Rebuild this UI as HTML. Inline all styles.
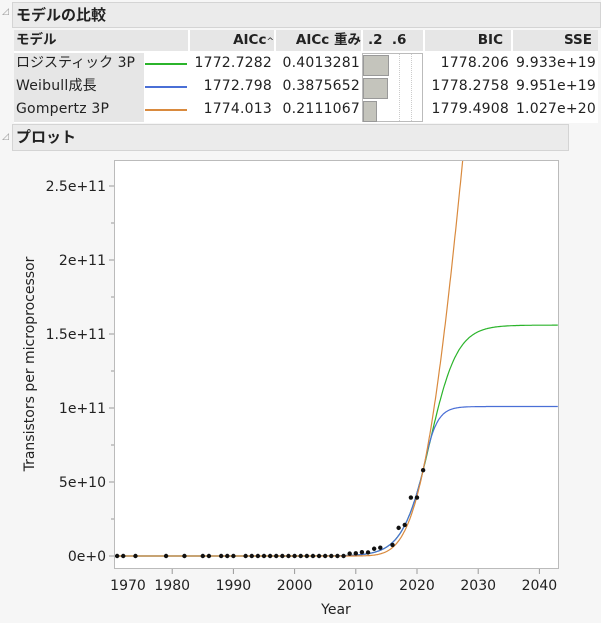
<!DOCTYPE html>
<html><head><meta charset="utf-8"><style>
body{margin:0;width:601px;height:623px;background:#f6f6f6;font-family:"DejaVu Sans","Noto Sans CJK JP",sans-serif;position:relative;overflow:hidden;color:#222}
.abs{position:absolute}
.bar{background:#ebebeb;border:1px solid #d4d4d4;font-weight:bold;font-size:15px;line-height:25px;padding-left:3px;box-sizing:border-box}
.tri{font-size:9px;color:#999}
.c{position:absolute;font-size:14px;line-height:22px;white-space:nowrap;letter-spacing:0.2px}
.h{font-weight:bold;background:#e6e6e6;top:30px;height:21px;line-height:21px;font-size:13.5px;letter-spacing:0}
</style></head><body>
<div class="abs tri" style="left:2px;top:7px">◿</div>
<div class="abs bar" style="left:12px;top:2px;width:589px;height:26px">モデルの比較</div>
<div class="abs" style="left:14px;top:30px;width:584px;height:93px;background:#fff"></div>
<div class="c h" style="left:14px;width:130px;padding-left:2px">モデル</div>
<div class="c h" style="left:146px;width:42px"></div>
<div class="c h" style="left:190px;width:84px;text-align:right">AICc<span style="font-size:9px;font-weight:normal">^</span></div>
<div class="c h" style="left:276px;width:85px;text-align:right">AICc 重み</div>
<div class="c h" style="left:363px;width:60px;padding-left:5px;box-sizing:border-box">.2&nbsp; .6</div>
<div class="c h" style="left:425px;width:86px;text-align:right;padding-right:8px;box-sizing:border-box">BIC</div>
<div class="c h" style="left:513px;width:85px;text-align:right;padding-right:6px;box-sizing:border-box">SSE</div>
<div class="abs" style="left:14px;top:53px;width:130px;height:69px;background:#e6e6e6"></div>
<div class="c" style="left:16px;top:52px;letter-spacing:0">ロジスティック 3P</div>
<div class="c" style="left:16px;top:75px">Weibull成長</div>
<div class="c" style="left:16px;top:98px">Gompertz 3P</div>
<div class="abs" style="left:145px;top:63px;width:42px;height:2px;background:#2bb42b"></div>
<div class="abs" style="left:145px;top:86px;width:42px;height:2px;background:#4a6fd6"></div>
<div class="abs" style="left:145px;top:109px;width:42px;height:2px;background:#d98a3e"></div>
<div class="c" style="left:186px;top:52px;width:86px;text-align:right">1772.7282</div>
<div class="c" style="left:186px;top:75px;width:86px;text-align:right">1772.798</div>
<div class="c" style="left:186px;top:98px;width:86px;text-align:right">1774.013</div>
<div class="c" style="left:272px;top:52px;width:88px;text-align:right">0.4013281</div>
<div class="c" style="left:272px;top:75px;width:88px;text-align:right">0.3875652</div>
<div class="c" style="left:272px;top:98px;width:88px;text-align:right">0.2111067</div>
<div class="abs" style="left:362px;top:53px;width:61px;height:69px;border:1px solid #bbb;box-sizing:border-box;background:#fff">
 <div class="abs" style="left:36px;top:0;height:67px;border-left:1px dotted #ccc"></div>
 <div class="abs" style="left:48px;top:0;height:67px;border-left:1px dotted #ccc"></div>
 <div class="abs" style="left:0;top:1px;width:24px;height:19px;background:#c4c4bc;border:1px solid #999"></div>
 <div class="abs" style="left:0;top:24px;width:23px;height:19px;background:#c4c4bc;border:1px solid #999"></div>
 <div class="abs" style="left:0;top:47px;width:12px;height:19px;background:#c4c4bc;border:1px solid #999"></div>
</div>
<div class="c" style="left:421px;top:52px;width:88px;text-align:right">1778.206</div>
<div class="c" style="left:421px;top:75px;width:88px;text-align:right">1778.2758</div>
<div class="c" style="left:421px;top:98px;width:88px;text-align:right">1779.4908</div>
<div class="c" style="left:508px;top:52px;width:88px;text-align:right">9.933e+19</div>
<div class="c" style="left:508px;top:75px;width:88px;text-align:right">9.951e+19</div>
<div class="c" style="left:508px;top:98px;width:88px;text-align:right">1.027e+20</div>
<div class="abs tri" style="left:2px;top:132px">◿</div>
<div class="abs bar" style="left:12px;top:124px;width:557px;height:27px">プロット</div>
<svg class="abs" style="left:0;top:0;font-family:'DejaVu Sans',sans-serif" width="601" height="623" id="s"></svg>
<script>
var s=document.getElementById('s'),h='';
function X(t){return 417+6.12*(t-2020);}
function Y(v){return 556-v/5e10*74;}
h+='<rect x="114.5" y="160.5" width="444" height="408" fill="#fff" stroke="#bbb"/>';
h+='<defs><clipPath id="cp"><rect x="115" y="161" width="443" height="407"/></clipPath></defs>';
var yl=['0e+0','5e+10','1e+11','1.5e+11','2e+11','2.5e+11'];
for(var i=0;i<6;i++){var y=Y(i*5e10);h+='<line x1="109" x2="114" y1="'+y+'" y2="'+y+'" stroke="#999"/>';
h+='<text x="106" y="'+(y+5)+'" text-anchor="end" font-size="14" fill="#222">'+yl[i]+'</text>';
if(i<5){var y2=Y(i*5e10+2.5e10);h+='<line x1="111" x2="114" y1="'+y2+'" y2="'+y2+'" stroke="#999"/>';}}
for(var t=1970;t<=2040;t+=10){var x=X(t);if(t>1970)h+='<line x1="'+x+'" x2="'+x+'" y1="569" y2="574" stroke="#999"/>';
h+='<text x="'+(t==1970?128:x)+'" y="590" text-anchor="middle" font-size="14" fill="#222">'+t+'</text>';}
h+='<text x="336" y="614" text-anchor="middle" font-size="14" fill="#222">Year</text>';
h+='<text transform="translate(34,364) rotate(-90)" text-anchor="middle" font-size="14" fill="#222">Transistors per microprocessor</text>';
function path(f,c){var d='';for(var t=1970.5;t<=2043;t+=0.1){d+=(d?'L':'M')+X(t).toFixed(1)+' '+Y(f(t)).toFixed(1);}h+='<path d="'+d+'" fill="none" stroke="'+c+'" stroke-width="1.2" clip-path="url(#cp)"/>';}
function lg(t){return 1.56e11/(1+1.69*Math.exp(-0.45*(t-2021)));}
function wb(t){if(t<2021)return lg(t);return 1.01e11/(1+0.741*Math.exp(-0.8*(t-2021)))+ (lg(2021)-1.01e11/1.741)*Math.exp(-0.8*(t-2021));}
function gp(t){return 1e12*Math.exp(-2.847*Math.exp(-0.119*(t-2021)));}
path(lg,'#2bb42b');path(wb,'#4a6fd6');path(gp,'#d98a3e');
var pts=[[1971,0],[1972,0],[1974,0],[1979,0],[1982,0],[1985,0],[1986,0],[1988,0],[1989,0],[1990,0]];
for(var t=1992;t<=2008;t++)pts.push([t,0]);
pts=pts.concat([[2009,1.6e9],[2010,1.8e9],[2011,2.6e9],[2012,2.4e9],[2013,4.9e9],[2014,5.6e9],[2016,7.5e9],[2017,1.9e10],[2018,2.1e10],[2019,3.95e10],[2020,3.95e10],[2021,5.8e10]]);
pts.forEach(function(p){var y=p[1]==0?556:Y(p[1]);h+='<circle cx="'+X(p[0])+'" cy="'+y+'" r="2.2" fill="#111"/>';});
s.innerHTML=h;
</script>
</body></html>
